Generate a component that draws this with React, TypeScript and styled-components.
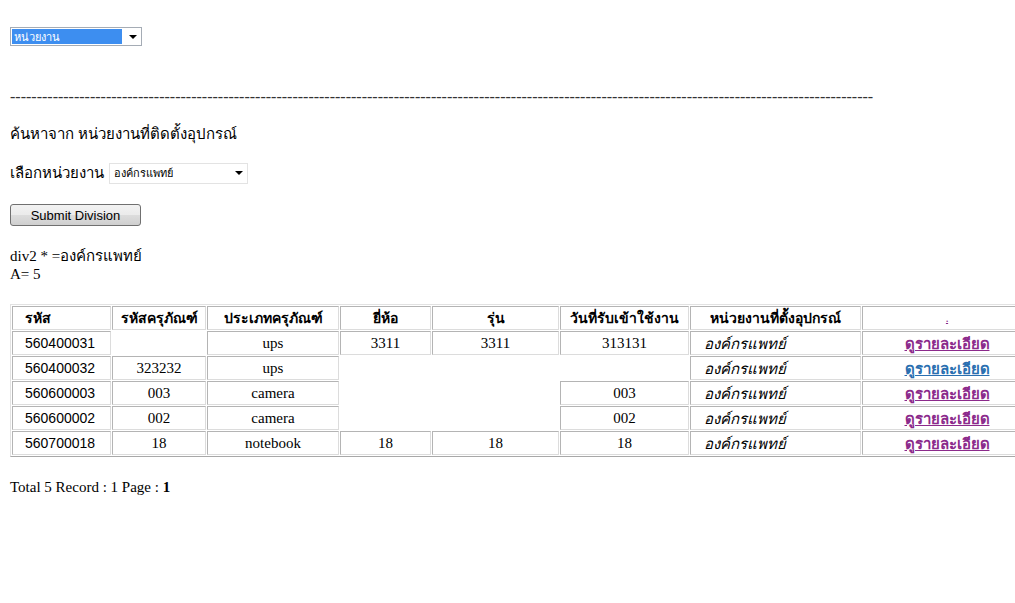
import { createGlobalStyle } from "styled-components";
import styled from "styled-components";

const GlobalStyle = createGlobalStyle`
  body {
    margin: 0;
    background: #ffffff;
    color: #000000;
    font-family: "Liberation Serif", "Times New Roman", serif;
    overflow: hidden;
  }
`;

interface Row {
  id: string;
  code: string;
  kind: string;
  brand: string;
  model: string;
  date: string;
  visited: boolean;
}

const rows: Row[] = [
  { id: "560400031", code: "", kind: "ups", brand: "3311", model: "3311", date: "313131", visited: true },
  { id: "560400032", code: "323232", kind: "ups", brand: "", model: "", date: "", visited: false },
  { id: "560600003", code: "003", kind: "camera", brand: "", model: "", date: "003", visited: true },
  { id: "560600002", code: "002", kind: "camera", brand: "", model: "", date: "002", visited: true },
  { id: "560700018", code: "18", kind: "notebook", brand: "18", model: "18", date: "18", visited: true },
];

const headers = [
  "รหัส",
  "รหัสครุภัณฑ์",
  "ประเภทครุภัณฑ์",
  "ยี่ห้อ",
  "รุ่น",
  "วันที่รับเข้าใช้งาน",
  "หน่วยงานที่ตั้งอุปกรณ์",
];

// border-box widths of each column, spacing is 1px
const colWidths = [99, 94, 132, 91, 127, 129, 171, 170];
const tableWidth = colWidths.reduce((a, b) => a + b, 0) + colWidths.length + 1 + 2;

const App = () => {
  return (
    <Page>
      <GlobalStyle />
      <FakeSelect $width={132}>
        <Picked>หน่วยงาน</Picked>
        <Arrow />
      </FakeSelect>

      <Divider>{"-".repeat(162)}</Divider>

      <Heading>ค้นหาจาก หน่วยงานที่ติดตั้งอุปกรณ์</Heading>

      <Field>
        <Label>เลือกหน่วยงาน</Label>
        <FakeSelect $width={139} $plain>
          <Value>องค์กรแพทย์</Value>
          <Arrow />
        </FakeSelect>
      </Field>

      <Button>Submit Division</Button>

      <Debug>
        div2 * =องค์กรแพทย์
        <br />
        A= 5
      </Debug>

      <Table style={{ width: tableWidth }}>
        <colgroup>
          {colWidths.map((w, i) => (
            <col key={i} style={{ width: w }} />
          ))}
        </colgroup>
        <thead>
          <tr>
            {headers.map((h, i) => (
              <Th key={h} $left={i === 0}>
                {h}
              </Th>
            ))}
            <Th>
              <TinyLink>.</TinyLink>
            </Th>
          </tr>
        </thead>
        <tbody>
          {rows.map((r) => (
            <tr key={r.id}>
              <IdCell>{r.id}</IdCell>
              <Td>{r.code}</Td>
              <Td>{r.kind}</Td>
              <Td>{r.brand}</Td>
              <Td>{r.model}</Td>
              <Td>{r.date}</Td>
              <UnitCell>องค์กรแพทย์</UnitCell>
              <Td>
                <DetailLink $visited={r.visited}>ดูรายละเอียด</DetailLink>
              </Td>
            </tr>
          ))}
        </tbody>
      </Table>

      <Summary>
        Total 5 Record : 1 Page : <b>1</b>
      </Summary>
    </Page>
  );
};

const Page = styled.div`
  padding: 27px 0 0 10px;
  width: 1100px;
`;

const FakeSelect = styled.div<{ $width: number; $plain?: boolean }>`
  width: ${(p) => p.$width}px;
  height: ${(p) => (p.$plain ? 21 : 19)}px;
  box-sizing: border-box;
  border: 1px solid ${(p) => (p.$plain ? "#e3e3e3" : "#a5acb5")};
  background: #ffffff;
  display: flex;
  align-items: center;
  padding: 1px;
  position: relative;
`;

const Picked = styled.div`
  width: 110px;
  height: 15px;
  background: #3d8ef0;
  color: #ffffff;
  font-family: "Noto Sans", "DejaVu Sans", sans-serif;
  font-size: 11px;
  line-height: 15px;
  padding-left: 2px;
  box-sizing: border-box;
`;

const Value = styled.div`
  flex: 1;
  font-family: "Noto Sans", "DejaVu Sans", sans-serif;
  font-size: 11px;
  padding-left: 3px;
`;

const Arrow = styled.span`
  position: absolute;
  right: 4px;
  top: 50%;
  margin-top: -2px;
  width: 0;
  height: 0;
  border-left: 4px solid transparent;
  border-right: 4px solid transparent;
  border-top: 4px solid #000000;
`;

const Divider = styled.div`
  margin-top: 42px;
  font-family: "Liberation Serif", serif;
  font-size: 16px;
  color: #333333;
  white-space: nowrap;
  line-height: 18px;
`;

const Heading = styled.div`
  margin-top: 17px;
  font-family: "Noto Sans", "DejaVu Sans", sans-serif;
  font-size: 15px;
  line-height: 20px;
`;

const Field = styled.div`
  margin-top: 18px;
  display: flex;
  align-items: center;
  gap: 5px;
`;

const Label = styled.span`
  font-family: "Noto Sans", "DejaVu Sans", sans-serif;
  font-size: 15px;
`;

const Button = styled.div`
  margin-top: 19px;
  width: 131px;
  height: 22px;
  box-sizing: border-box;
  border: 1px solid #707070;
  border-radius: 3px;
  background: linear-gradient(#f2f2f2, #ebebeb 50%, #dddddd 50%, #cfcfcf);
  font-family: "Liberation Sans", Arial, sans-serif;
  font-size: 13px;
  display: flex;
  align-items: center;
  justify-content: center;
`;

const Debug = styled.div`
  margin-top: 21px;
  font-family: "Liberation Serif", serif;
  font-size: 15px;
  line-height: 18px;
`;

const Table = styled.table`
  margin-top: 21px;
  border-style: solid;
  border-width: 1px;
  border-color: #e2e2e2 #a8a8a8 #a8a8a8 #e2e2e2;
  border-spacing: 1px;
  empty-cells: hide;
  table-layout: fixed;
`;

const Cell = `
  border-style: solid;
  border-width: 1px;
  border-color: #b4b4b4 #dcdcdc #dcdcdc #b4b4b4;
  height: 22px;
  line-height: 18px;
  white-space: nowrap;
  overflow: hidden;
`;

const Th = styled.th<{ $left?: boolean }>`
  ${Cell}
  padding: 0 ${(p) => (p.$left ? "12px" : "2px")};
  text-align: ${(p) => (p.$left ? "left" : "center")};
  font-family: "Noto Sans", "DejaVu Sans", sans-serif;
  font-size: 14px;
  font-weight: bold;
`;

const Td = styled.td`
  ${Cell}
  padding: 0 2px;
  text-align: center;
  font-family: "Liberation Serif", serif;
  font-size: 15px;
`;

const IdCell = styled(Td)`
  text-align: left;
  padding-left: 12px;
  font-family: "Liberation Sans", sans-serif;
  font-size: 14px;
`;

const UnitCell = styled(Td)`
  text-align: left;
  padding-left: 13px;
  font-family: "Noto Sans", "DejaVu Sans", sans-serif;
  font-size: 15px;
  font-style: italic;
`;

const DetailLink = styled.a<{ $visited: boolean }>`
  color: ${(p) => (p.$visited ? "#8b2a8b" : "#2a6fb0")};
  text-decoration: underline;
  font-family: "Noto Sans", "DejaVu Sans", sans-serif;
  font-size: 15px;
  font-weight: bold;
  line-height: 18px;
  cursor: pointer;
`;

const TinyLink = styled.a`
  color: #8b2a8b;
  font-size: 8px;
  text-decoration: underline;
`;

const Summary = styled.div`
  margin-top: 22px;
  font-family: "Liberation Serif", serif;
  font-size: 15px;
`;

export default App;
